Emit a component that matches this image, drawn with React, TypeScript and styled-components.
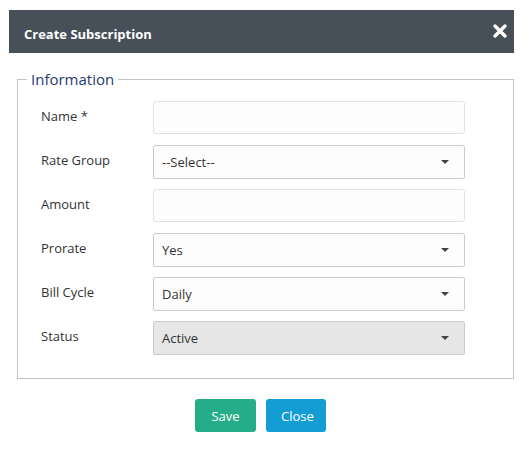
import React from "react";
import styled, { createGlobalStyle } from "styled-components";

const Global = createGlobalStyle`
  html, body { margin: 0; padding: 0; background: #ffffff; }
  body { font-family: "Open Sans", "Noto Sans", sans-serif; }
  * { box-sizing: border-box; }
`;

const Page = styled.div`
  width: 531px;
  height: 462px;
  padding: 10px 17px 0 9px;
  background: #fff;
`;

const Header = styled.div`
  height: 43px;
  background: #474f59;
  display: flex;
  align-items: center;
  justify-content: space-between;
  padding: 0 6px 0 15px;
`;

const Title = styled.h4`
  margin: 0;
  color: #fff;
  font-size: 13px;
  font-weight: 700;
  padding-top: 4px;
`;

const CloseIcon = styled.svg`
  width: 16px;
  height: 16px;
  display: block;
  margin-top: -1px;
`;

const Body = styled.div`
  padding: 16px 0 0 8px;
`;

const Fieldset = styled.fieldset`
  margin: 0;
  border: 1px solid #c3c3c3;
  padding: 12px 0 24px 0;
  min-width: 0;
`;

const Legend = styled.legend`
  margin-left: 9px;
  padding: 0 4px 0 4px;
  color: #263a70;
  font-size: 15px;
  line-height: 20px;
`;

const Rows = styled.div`
  display: flex;
  flex-direction: column;
  gap: 11px;
  padding-left: 23px;
`;

const Row = styled.div`
  display: flex;
  align-items: center;
  height: 33px;
`;

const Label = styled.label`
  width: 112px;
  font-size: 13px;
  color: #333;
  padding-bottom: 4px;
`;

const TextBox = styled.div`
  width: 312px;
  height: 33px;
  border: 1px solid #e2e2e2;
  border-radius: 3px;
  background: #fdfdfd;
`;

const Select = styled.div<{ $disabled?: boolean }>`
  width: 312px;
  height: 34px;
  border: 1px solid #cccccc;
  border-radius: 2px;
  background: ${(p) => (p.$disabled ? "#e6e6e6" : "#fdfdfd")};
  display: flex;
  align-items: center;
  justify-content: space-between;
  padding: 0 15px 0 8px;
  font-size: 13px;
  color: #333;
`;

const Caret = styled.span`
  width: 0;
  height: 0;
  border-left: 4px solid transparent;
  border-right: 4px solid transparent;
  border-top: 4px solid #444;
  margin-top: 1px;
`;

const Footer = styled.div`
  display: flex;
  justify-content: center;
  gap: 10px;
  padding: 20px 10px 0 0;
`;

const Button = styled.button<{ $variant: "save" | "close" }>`
  height: 33px;
  border: none;
  border-radius: 3px;
  padding: 0 15px;
  font-family: "Open Sans", "Noto Sans", sans-serif;
  font-size: 13px;
  color: #fff;
  background: ${(p) => (p.$variant === "save" ? "#25ad89" : "#139dd4")};
  width: ${(p) => (p.$variant === "save" ? "61px" : "60px")};
`;

type Field = { label: string; kind: "text" | "select" | "disabled"; value?: string };

const fields: Field[] = [
  { label: "Name *", kind: "text" },
  { label: "Rate Group", kind: "select", value: "--Select--" },
  { label: "Amount", kind: "text" },
  { label: "Prorate", kind: "select", value: "Yes" },
  { label: "Bill Cycle", kind: "select", value: "Daily" },
  { label: "Status", kind: "disabled", value: "Active" },
];

export default function App() {
  return (
    <>
      <Global />
      <Page>
        <Header>
          <Title>Create Subscription</Title>
          <CloseIcon viewBox="0 0 16 16">
            <path d="M3 3 L13 13 M13 3 L3 13" stroke="#fff" strokeWidth="3.4" strokeLinecap="round" />
          </CloseIcon>
        </Header>
        <Body>
          <Fieldset>
            <Legend>Information</Legend>
            <Rows>
              {fields.map((f) => (
                <Row key={f.label}>
                  <Label>{f.label}</Label>
                  {f.kind === "text" ? (
                    <TextBox />
                  ) : (
                    <Select $disabled={f.kind === "disabled"}>
                      <span>{f.value}</span>
                      <Caret />
                    </Select>
                  )}
                </Row>
              ))}
            </Rows>
          </Fieldset>
          <Footer>
            <Button $variant="save">Save</Button>
            <Button $variant="close">Close</Button>
          </Footer>
        </Body>
      </Page>
    </>
  );
}
